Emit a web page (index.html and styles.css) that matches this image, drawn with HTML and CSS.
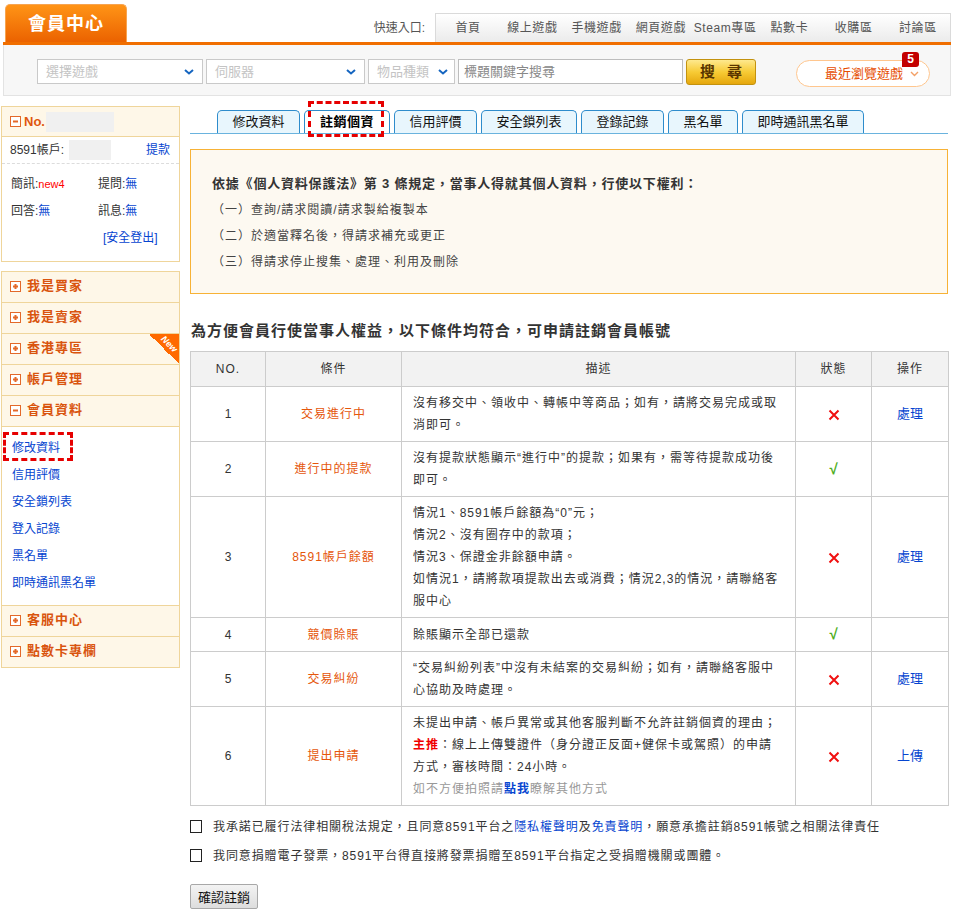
FILE: index.html
```html
<!DOCTYPE html>
<html lang="zh-Hant">
<head>
<meta charset="utf-8">
<title>會員中心</title>
<link rel="stylesheet" href="styles.css">
</head>
<body>
<div class="page">
  <header class="top">
    <div class="brand">會員中心</div>
    <div class="quick">
      <span class="quick-label">快速入口:</span>
      <nav class="quick-nav">
        <a>首頁</a><a>線上遊戲</a><a>手機遊戲</a><a>網頁遊戲</a><a>Steam專區</a><a>點數卡</a><a>收購區</a><a>討論區</a>
      </nav>
    </div>
  </header>

  <div class="searchbar">
    <div class="sel sel-game"><span>選擇遊戲</span><svg class="chev" width="10" height="6" viewBox="0 0 10 6"><path d="M1 1l4 3.5L9 1" fill="none" stroke="#1565c0" stroke-width="2"/></svg></div>
    <div class="sel sel-server"><span>伺服器</span><svg class="chev" width="10" height="6" viewBox="0 0 10 6"><path d="M1 1l4 3.5L9 1" fill="none" stroke="#1565c0" stroke-width="2"/></svg></div>
    <div class="sel sel-type"><span>物品種類</span><svg class="chev" width="10" height="6" viewBox="0 0 10 6"><path d="M1 1l4 3.5L9 1" fill="none" stroke="#1565c0" stroke-width="2"/></svg></div>
    <div class="kw">標題關鍵字搜尋</div>
    <button class="btn-search">搜尋</button>
    <div class="recent">最近瀏覽遊戲<svg class="chev-o" width="9" height="6" viewBox="0 0 9 6"><path d="M1 1l3.5 3.5L8 1" fill="none" stroke="#f3a066" stroke-width="1.4"/></svg><span class="badge">5</span></div>
  </div>

  <div class="layout">
    <aside class="side">
      <div class="userbox">
        <div class="ub-head">
          <svg width="11" height="11" viewBox="0 0 11 11"><rect x="0.5" y="0.5" width="10" height="10" fill="#fff" stroke="#e3692a"/><path d="M3 5.5h5" stroke="#e3692a" stroke-width="2"/></svg>
          <b class="ub-no">No.</b><span class="mask m1"></span>
        </div>
        <div class="ub-acct"><span>8591帳戶:</span><span class="mask m2"></span><a class="ub-draw">提款</a></div>
        <div class="ub-msgs">
          <span>簡訊:<em class="new">new4</em></span><span>提問:<a>無</a></span>
          <span>回答:<a>無</a></span><span>訊息:<a>無</a></span>
        </div>
        <div class="ub-logout"><a>[安全登出]</a></div>
      </div>

      <div class="menu">
        <div class="menu-head"><svg width="11" height="11" viewBox="0 0 11 11"><rect x="0.5" y="0.5" width="10" height="10" fill="#fff" stroke="#e3692a"/><path d="M3 5.5h5M5.5 3v5" stroke="#e3692a" stroke-width="2"/></svg>我是買家</div>
        <div class="menu-head"><svg width="11" height="11" viewBox="0 0 11 11"><rect x="0.5" y="0.5" width="10" height="10" fill="#fff" stroke="#e3692a"/><path d="M3 5.5h5M5.5 3v5" stroke="#e3692a" stroke-width="2"/></svg>我是賣家</div>
        <div class="menu-head hk"><svg width="11" height="11" viewBox="0 0 11 11"><rect x="0.5" y="0.5" width="10" height="10" fill="#fff" stroke="#e3692a"/><path d="M3 5.5h5M5.5 3v5" stroke="#e3692a" stroke-width="2"/></svg>香港專區<span class="ribbon"><span class="ribbon-text">New</span></span></div>
        <div class="menu-head"><svg width="11" height="11" viewBox="0 0 11 11"><rect x="0.5" y="0.5" width="10" height="10" fill="#fff" stroke="#e3692a"/><path d="M3 5.5h5M5.5 3v5" stroke="#e3692a" stroke-width="2"/></svg>帳戶管理</div>
        <div class="menu-head"><svg width="11" height="11" viewBox="0 0 11 11"><rect x="0.5" y="0.5" width="10" height="10" fill="#fff" stroke="#e3692a"/><path d="M3 5.5h5" stroke="#e3692a" stroke-width="2"/></svg>會員資料</div>
        <ul class="menu-sub">
          <li class="cur"><a>修改資料</a><span class="annot annot-side"></span></li>
          <li><a>信用評價</a></li>
          <li><a>安全鎖列表</a></li>
          <li><a>登入記錄</a></li>
          <li><a>黑名單</a></li>
          <li><a>即時通訊黑名單</a></li>
        </ul>
        <div class="menu-head"><svg width="11" height="11" viewBox="0 0 11 11"><rect x="0.5" y="0.5" width="10" height="10" fill="#fff" stroke="#e3692a"/><path d="M3 5.5h5M5.5 3v5" stroke="#e3692a" stroke-width="2"/></svg>客服中心</div>
        <div class="menu-head last"><svg width="11" height="11" viewBox="0 0 11 11"><rect x="0.5" y="0.5" width="10" height="10" fill="#fff" stroke="#e3692a"/><path d="M3 5.5h5M5.5 3v5" stroke="#e3692a" stroke-width="2"/></svg>點數卡專欄</div>
      </div>
    </aside>

    <main class="main">
      <div class="tabs">
        <a class="tab">修改資料</a>
        <a class="tab active">註銷個資<span class="annot annot-tab"></span></a>
        <a class="tab">信用評價</a>
        <a class="tab">安全鎖列表</a>
        <a class="tab">登錄記錄</a>
        <a class="tab">黑名單</a>
        <a class="tab">即時通訊黑名單</a>
      </div>

      <div class="notice">
        <p class="lead">依據《個人資料保護法》第 3 條規定，當事人得就其個人資料，行使以下權利：</p>
        <p>（一）查詢/請求閱讀/請求製給複製本</p>
        <p>（二）於適當釋名後，得請求補充或更正</p>
        <p>（三）得請求停止搜集、處理、利用及刪除</p>
      </div>

      <h2 class="title">為方便會員行使當事人權益，以下條件均符合，可申請註銷會員帳號</h2>

      <table class="cond">
        <colgroup><col class="c-no"><col class="c-cond"><col class="c-desc"><col class="c-st"><col class="c-op"></colgroup>
        <thead>
          <tr><th>NO.</th><th>條件</th><th>描述</th><th>狀態</th><th>操作</th></tr>
        </thead>
        <tbody>
          <tr>
            <td>1</td><td class="cname">交易進行中</td>
            <td class="desc">沒有移交中、領收中、轉帳中等商品；如有，請將交易完成或取<br>消即可。</td>
            <td><svg class="xm" width="12" height="12" viewBox="0 0 12 12"><path d="M1.5 1.5l9 9M10.5 1.5l-9 9" stroke="#f01010" stroke-width="2"/></svg></td>
            <td><a class="op">處理</a></td>
          </tr>
          <tr>
            <td>2</td><td class="cname">進行中的提款</td>
            <td class="desc">沒有提款狀態顯示“進行中”的提款；如果有，需等待提款成功後<br>即可。</td>
            <td><span class="ok">√</span></td>
            <td></td>
          </tr>
          <tr>
            <td>3</td><td class="cname">8591帳戶餘額</td>
            <td class="desc">情況1、8591帳戶餘額為“0”元；<br>情況2、沒有圈存中的款項；<br>情況3、保證金非餘額申請。<br>如情況1，請將款項提款出去或消費；情況2,3的情況，請聯絡客<br>服中心</td>
            <td><svg class="xm" width="12" height="12" viewBox="0 0 12 12"><path d="M1.5 1.5l9 9M10.5 1.5l-9 9" stroke="#f01010" stroke-width="2"/></svg></td>
            <td><a class="op">處理</a></td>
          </tr>
          <tr>
            <td>4</td><td class="cname">競價賒賬</td>
            <td class="desc">賒賬顯示全部已還款</td>
            <td><span class="ok">√</span></td>
            <td></td>
          </tr>
          <tr>
            <td>5</td><td class="cname">交易糾紛</td>
            <td class="desc">“交易糾紛列表”中沒有未結案的交易糾紛；如有，請聯絡客服中<br>心協助及時處理。</td>
            <td><svg class="xm" width="12" height="12" viewBox="0 0 12 12"><path d="M1.5 1.5l9 9M10.5 1.5l-9 9" stroke="#f01010" stroke-width="2"/></svg></td>
            <td><a class="op">處理</a></td>
          </tr>
          <tr>
            <td>6</td><td class="cname">提出申請</td>
            <td class="desc">未提出申請、帳戶異常或其他客服判斷不允許註銷個資的理由；<br><b class="hot">主推</b>：線上上傳雙證件（身分證正反面+健保卡或駕照）的申請<br>方式，審核時間：24小時。<br><span class="muted">如不方便拍照請<a class="strong">點我</a>瞭解其他方式</span></td>
            <td><svg class="xm" width="12" height="12" viewBox="0 0 12 12"><path d="M1.5 1.5l9 9M10.5 1.5l-9 9" stroke="#f01010" stroke-width="2"/></svg></td>
            <td><a class="op">上傳</a></td>
          </tr>
        </tbody>
      </table>

      <div class="agree">
        <label class="agree-row"><input type="checkbox" class="cb">我承諾已履行法律相關稅法規定，且同意8591平台之<a>隱私權聲明</a>及<a>免責聲明</a>，願意承擔註銷8591帳號之相關法律責任</label>
        <label class="agree-row"><input type="checkbox" class="cb">我同意捐贈電子發票，8591平台得直接將發票捐贈至8591平台指定之受捐贈機關或團體。</label>
      </div>

      <button class="confirm">確認註銷</button>
    </main>
  </div>
</div>
</body>
</html>
```

FILE: styles.css
```css
* { box-sizing: border-box; }
html, body { margin: 0; padding: 0; }
body {
  font-family: "Liberation Sans", "Noto Sans CJK TC", sans-serif;
  font-size: 12px;
  line-height: 1.5;
  color: #333;
  background: #fff;
}
a { color: #0645d0; text-decoration: none; cursor: pointer; }
ul { margin: 0; padding: 0; list-style: none; }

.page { width: 951px; }

/* ---------- header ---------- */
.top {
  display: flex;
  align-items: flex-end;
  width: 948px;
  height: 45px;
  margin-left: 3px;
  padding-top: 4px;
  border-bottom: 3px solid #f06e00;
}
.brand {
  width: 122px;
  height: 38px;
  margin-left: 2px;
  border: 1px solid #f7a450;
  border-bottom: 0;
  border-radius: 5px 5px 0 0;
  background: linear-gradient(#ff9416, #eb6200);
  color: #fff;
  font-size: 18px;
  font-weight: bold;
  letter-spacing: 1px;
  line-height: 38px;
  text-align: center;
}
.quick { margin-left: auto; display: flex; align-items: center; }
.quick-label { color: #555; margin-right: 10px; }
.quick-nav {
  display: grid;
  grid-template-columns: repeat(8, 1fr);
  width: 516px;
  height: 29px;
  border: 1px solid #dadada;
  border-bottom: 0;
  background: linear-gradient(#ffffff, #ebebeb);
}
.quick-nav a {
  color: #555;
  text-align: center;
  line-height: 28px;
  letter-spacing: 0.6px;
}

/* ---------- search bar ---------- */
.searchbar {
  display: flex;
  align-items: flex-start;
  width: 948px;
  height: 51px;
  margin-left: 3px;
  padding: 14px 20px 0 33px;
  background: #f7f7f7;
  border: 1px solid #e3e3e3;
  border-top: 0;
}
.sel {
  display: flex;
  align-items: center;
  justify-content: space-between;
  height: 25px;
  margin-right: 3px;
  padding: 0 8px 0 8px;
  background: #fff;
  border: 1px solid #c9c9c9;
  color: #c4c4c4;
  font-size: 13px;
}
.sel-game { width: 166px; }
.sel-server { width: 159px; }
.sel-type { width: 87px; padding-right: 6px; }
.kw {
  width: 225px;
  height: 25px;
  margin-right: 3px;
  padding-left: 5px;
  background: #fff;
  border: 1px solid #bdbdbd;
  color: #888;
  font-size: 13px;
  line-height: 23px;
}
.btn-search {
  width: 70px;
  height: 26px;
  padding: 0 0 0 12px;
  border: 1px solid #c3920f;
  border-radius: 3px;
  background: linear-gradient(#fee98e, #f7cb35 50%, #e5a70d);
  color: #5a3600;
  font-family: "Liberation Sans", "Noto Sans CJK TC", sans-serif;
  font-size: 15px;
  font-weight: bold;
  letter-spacing: 12px;
  line-height: 24px;
}
.recent {
  position: relative;
  display: flex;
  align-items: center;
  gap: 7px;
  width: 134px;
  height: 27px;
  margin-left: auto;
  margin-top: 1px;
  padding-left: 28px;
  background: #fff;
  border: 1px solid #ffc68e;
  border-radius: 14px;
  color: #e64c00;
  font-size: 13px;
}
.badge {
  position: absolute;
  left: 105px;
  top: -9px;
  width: 17px;
  height: 15px;
  border-radius: 3px 3px 3px 0;
  background: #c30000;
  color: #fff;
  font-size: 12px;
  font-weight: bold;
  line-height: 15px;
  text-align: center;
}

/* ---------- layout ---------- */
.layout { display: flex; align-items: flex-start; margin-top: 10px; }
.side { width: 179px; margin-left: 1px; }
.main { width: 758px; margin-left: 10px; padding-top: 4px; }

/* ---------- side: user box ---------- */
.userbox { border: 1px solid #efd59b; }
.ub-head {
  display: flex;
  align-items: center;
  height: 30px;
  padding-left: 8px;
  background: #fef7e8;
  border-bottom: 1px solid #efd59b;
}
.ub-no { margin-left: 3px; color: #e0570f; font-size: 13px; }
.mask { display: inline-block; height: 20px; background: #f0f0f0; }
.m1 { width: 68px; margin-left: 1px; }
.m2 { width: 42px; margin-left: 5px; }
.ub-acct {
  display: flex;
  align-items: center;
  height: 27px;
  padding: 0 9px 0 8px;
  border-bottom: 1px dashed #dcdcdc;
}
.ub-draw { margin-left: auto; }
.ub-msgs {
  display: grid;
  grid-template-columns: 87px 1fr;
  padding: 7px 0 0 9px;
  line-height: 27px;
}
.new { font-style: normal; color: #f00; font-size: 11px; }
.ub-logout { padding: 0 0 9px 101px; line-height: 27px; }

/* ---------- side: menu ---------- */
.menu { margin-top: 9px; border: 1px solid #efd59b; }
.menu-head {
  position: relative;
  display: flex;
  align-items: center;
  gap: 6px;
  height: 31px;
  padding-left: 8px;
  padding-bottom: 2px;
  background: #fef7e8;
  border-bottom: 1px solid #efd59b;
  color: #d9540e;
  font-size: 13px;
  font-weight: bold;
  letter-spacing: 1px;
}
.menu-head.last { height: 30px; border-bottom: 0; }
.ribbon {
  position: absolute;
  top: 0;
  right: 0;
  width: 30px;
  height: 30px;
  background: linear-gradient(to bottom left, #ff6a00 50%, transparent 50%);
}
.ribbon-text {
  position: absolute;
  top: 5px;
  right: 0;
  transform: rotate(45deg);
  color: #fff;
  font-size: 9px;
  font-style: italic;
  font-weight: bold;
  letter-spacing: 0;
  line-height: 10px;
}
.menu-sub { padding: 8px 0; border-bottom: 1px solid #efd59b; }
.menu-sub li { position: relative; padding-left: 10px; line-height: 27px; }
.annot { position: absolute; border: 3px dashed #e60000; pointer-events: none; }
.annot-side { left: 1px; top: -3px; width: 70px; height: 29px; }

/* ---------- tabs ---------- */
.tabs {
  display: flex;
  align-items: flex-end;
  gap: 4px;
  height: 24px;
  padding-left: 27px;
  border-bottom: 1px solid #6ab3de;
}
.tab {
  position: relative;
  height: 23px;
  padding: 0 14.5px;
  border: 1px solid #2e8ccc;
  border-bottom: 0;
  border-radius: 5px 5px 0 0;
  background: #e8f6fd;
  color: #111;
  font-size: 13px;
  line-height: 22px;
}
.tab.active { background: #fff; color: #000; font-weight: bold; letter-spacing: 0.5px; padding: 0 15px; }
.annot-tab { left: 3px; top: -10px; width: 76px; height: 36px; }

/* ---------- notice ---------- */
.notice {
  margin-top: 15px;
  padding: 21px 21px 18px;
  background: #fdf9f1;
  border: 1px solid #f7b236;
  color: #444;
  line-height: 26px;
}
.notice p { margin: 0; letter-spacing: 1px; }
.notice .lead { color: #333; font-size: 13px; font-weight: bold; letter-spacing: 0.8px; }

.title {
  margin: 27px 0 10px 1px;
  color: #333;
  font-size: 15px;
  font-weight: bold;
  letter-spacing: 1px;
  line-height: 20px;
}

/* ---------- table ---------- */
.cond { width: 758px; table-layout: fixed; border-collapse: collapse; }
.c-no { width: 75px; }
.c-cond { width: 136px; }
.c-desc { width: 394px; }
.c-st { width: 76px; }
.c-op { width: 77px; }
.cond th, .cond td { border: 1px solid #cccccc; }
.cond th {
  height: 35px;
  padding: 0;
  background: #f2f2f2;
  color: #333;
  font-weight: normal;
  letter-spacing: 1px;
}
.cond td { padding: 5px 11px; line-height: 22px; text-align: center; color: #333; }
.cond td.cname { color: #e5560b; letter-spacing: 1px; }
.cond td.desc { text-align: left; letter-spacing: 1px; }
.xm { vertical-align: middle; }
.ok { color: #4fae1e; font-size: 15px; font-weight: bold; }
.op { font-size: 13px; }
.hot { color: #f00000; }
.muted { color: #999; }
.strong { font-weight: bold; }

/* ---------- agree ---------- */
.agree { margin-top: 6px; }
.agree-row { display: flex; align-items: center; height: 29px; letter-spacing: 0.9px; }
.cb {
  appearance: none;
  -webkit-appearance: none;
  width: 12px;
  height: 13px;
  margin: 0 11px 0 0;
  background: #fff;
  border: 1px solid #222;
  border-radius: 0;
}
.confirm {
  display: block;
  width: 68px;
  height: 25px;
  margin-top: 14px;
  padding: 0;
  border: 1px solid #a8a8a8;
  border-radius: 2px;
  background: linear-gradient(#f3f3f3, #dddddd);
  color: #111;
  font-family: "Liberation Sans", "Noto Sans CJK TC", sans-serif;
  font-size: 13px;
}
```
